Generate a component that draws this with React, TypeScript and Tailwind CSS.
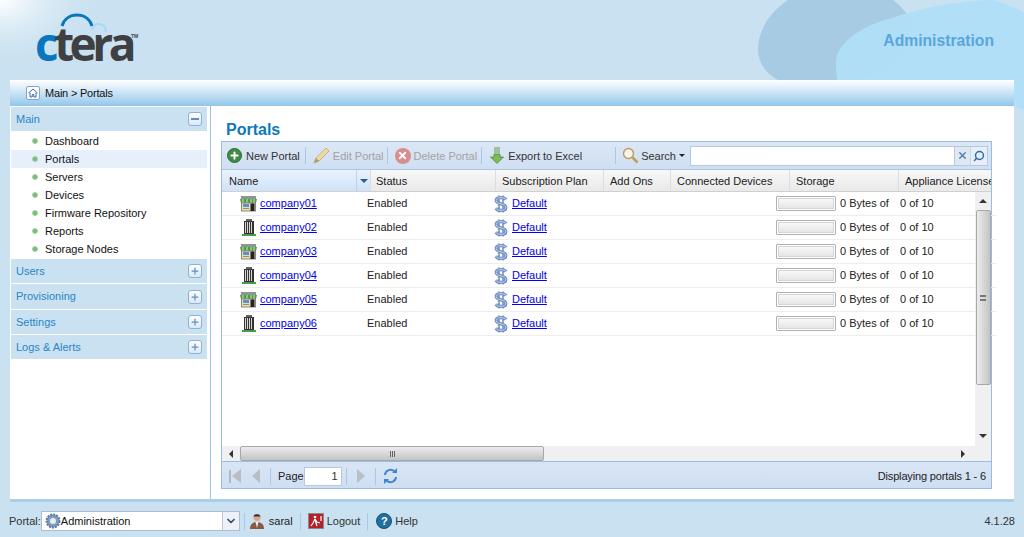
import { ChevronDown, Plus, X, Search } from "lucide-react";

const NAV = ["Dashboard", "Portals", "Servers", "Devices", "Firmware Repository", "Reports", "Storage Nodes"];

const SECTIONS = [
  { name: "Users", h: "h-[24px]" },
  { name: "Provisioning", h: "h-[25px]" },
  { name: "Settings", h: "h-[24px]" },
  { name: "Logs & Alerts", h: "h-[24px]" },
];

const COLUMNS = [
  { name: "Status", w: "w-[125px]", pl: "pl-[5px]" },
  { name: "Subscription Plan", w: "w-[108px]", pl: "pl-[6px]" },
  { name: "Add Ons", w: "w-[67px]", pl: "pl-[6px]" },
  { name: "Connected Devices", w: "w-[119px]", pl: "pl-[6px]" },
  { name: "Storage", w: "w-[109px]", pl: "pl-[6px]" },
  { name: "Appliance Licenses", w: "w-[110px]", pl: "pl-[6px]" },
];

const ROWS = ["company01", "company02", "company03", "company04", "company05", "company06"];

const Sep = ({ className = "" }: { className?: string }) => <div className={`w-px h-[17px] shrink-0 bg-[#a9c8e8] ${className}`} />;

const StoreIcon = () => (
  <svg width="17" height="17" viewBox="0 0 17 17" className="shrink-0">
    <rect x="1" y="1" width="15" height="3" fill="#8a9a8a" />
    <path d="M0 4h17l-1 4H1z" fill="#4c9a4c" />
    <path d="M3 4v4M7 4v4M11 4v4M14 4v4" stroke="#cfe8c8" strokeWidth="1" />
    <rect x="1.500" y="8" width="14" height="8" fill="#e8dcc0" stroke="#8a8a70" strokeWidth="1" />
    <rect x="3" y="9" width="6" height="3" fill="#5b8fd0" />
    <rect x="10.500" y="8.500" width="4" height="7.500" fill="#222" />
    <rect x="3" y="13" width="6" height="1" fill="#a88a50" />
  </svg>
);

const BuildingIcon = () => (
  <svg width="17" height="17" viewBox="0 0 17 17" className="shrink-0" shapeRendering="crispEdges">
    <rect x="4" y="2" width="10" height="13" fill="#333" />
    <rect x="5" y="3" width="1" height="11" fill="#d8d8d8" />
    <rect x="7" y="3" width="1" height="11" fill="#d8d8d8" />
    <rect x="9" y="3" width="1" height="11" fill="#d8d8d8" />
    <rect x="11" y="3" width="1" height="11" fill="#d8d8d8" />
    <rect x="6" y="0" width="6" height="2" fill="#666" />
    <rect x="2" y="15" width="14" height="2" fill="#4c9a4c" />
  </svg>
);

const DollarIcon = () => (
  <svg width="14" height="18" viewBox="0 0 14 18" className="shrink-0">
    <path d="M5 .5v17M9 .5v17" stroke="#5f7fb8" strokeWidth="1.400" />
    <path d="M12 4.600C10.800 3 9 2.600 7 2.600 4.200 2.600 2.200 3.600 2.200 5.600c0 4.200 9.600 2.400 9.600 6.800 0 2-2.200 3-4.800 3-2.200 0-4-.6-5.200-2.200" fill="none" stroke="#6f8fc4" strokeWidth="3.200" />
    <path d="M12 4.600C10.800 3 9 2.600 7 2.600 4.200 2.600 2.200 3.600 2.200 5.600c0 4.200 9.600 2.400 9.600 6.800 0 2-2.200 3-4.800 3-2.200 0-4-.6-5.200-2.200" fill="none" stroke="#c4d4ec" strokeWidth="1" />
  </svg>
);

const Logo = () => (
  <div className="relative w-[112px] h-[50px] ml-[35px] mt-[13px]">
    <svg width="112" height="50" viewBox="0 0 112 50" className="absolute left-0 top-0">
      <path d="M27 13C29 6 35 2 42 2c7 0 13 4 15 11" fill="none" stroke="#0a76bd" strokeWidth="3" />
      <path d="M57 17c1-4 3-6 6-6 5 0 8 3 8 8" fill="none" stroke="#a5d8f3" strokeWidth="2" />
    </svg>
    <div className="absolute left-0 top-[5px] font-['Open_Sans',sans-serif] font-bold text-[46px] leading-[50px] tracking-[-4.500px] text-[#3f4042]">
      <span className="text-[#0a76bd]">c</span>tera
    </div>
    <div className="absolute left-[96px] top-[21px] text-[5px] font-bold leading-none text-[#444]">TM</div>
  </div>
);

export default function App() {
  return (
    <div className="relative w-[1024px] h-[537px] overflow-hidden bg-[#c9e1f0] font-['Liberation_Sans',Arial,sans-serif] text-[11px] text-[#222] flex flex-col">
      {/* header art */}
      <svg width="1024" height="120" viewBox="0 0 1024 120" className="absolute left-0 top-0">
        <defs>
          <radialGradient id="corner" cx="0" cy="0" r="1">
            <stop offset="0" stopColor="#ffffff" />
            <stop offset="1" stopColor="#c9e1f0" stopOpacity="0" />
          </radialGradient>
        </defs>
        <rect width="110" height="70" fill="url(#corner)" />
        <path d="M788 0C770 12 758 30 758 50c0 14 10 26 24 32h60c30-4 68-16 70-50 1-12-8-24-19-32z" fill="#a6cbe3" />
        <path d="M836 63c0-22 30-38 52-44 30-10 72-19 105-19 12 3 24 8 31 13v97c-6-2-10-4-14-6H842c-4-12-6-28-6-41z" fill="#afdff8" fillOpacity=".93" />
      </svg>

      <div className="relative h-[80px] shrink-0">
        <Logo />
        <div className="absolute right-[30px] top-[31px] text-[15.700px] leading-[19px] font-bold text-[#5aa6dc]">Administration</div>
      </div>

      {/* main panel */}
      <div className="relative mx-[10px] h-[419px] shrink-0 bg-white flex flex-col">
        <div className="h-[26px] shrink-0 rounded-t-[3px] bg-gradient-to-b from-white to-[#92c6ea] flex items-center pl-[16px]">
          <div className="w-[14px] h-[14px] rounded-[2px] border border-[#7fa6cc] bg-white flex items-center justify-center">
            <svg width="10" height="10" viewBox="0 0 10 10">
              <path d="M.5 5 5 1l4.500 4M2 4.500V9h2.200V6.500h1.600V9H8V4.500" fill="none" stroke="#3a6ea5" strokeWidth="1" />
            </svg>
          </div>
          <span className="ml-[5px] text-[#111] tracking-[-0.2px]">Main &gt; Portals</span>
        </div>

        <div className="flex-1 flex min-h-0">
          {/* sidebar */}
          <div className="w-[201px] shrink-0 border-r border-[#9cc4e8] pl-px pr-[3px] pt-px">
            <div className="h-[24px] bg-[#c9e1f0] flex items-center justify-between pl-[5px] pr-[5px] text-[#2a86c8]">
              <span>Main</span>
              <div className="w-[14px] h-[14px] rounded-[3px] border border-[#8fb3d4] bg-gradient-to-b from-white to-[#dce8f4] flex items-center justify-center">
                <div className="w-[8px] h-[2px] bg-[#5f8fc0]" />
              </div>
            </div>
            <div className="pt-[1px] pb-[1px]">
              {NAV.map((n) => (
                <div key={n} className={`h-[18px] flex items-center pl-[21px] ${n === "Portals" ? "bg-[#e6f0fa]" : ""}`}>
                  <div className="w-[6px] h-[6px] rounded-full bg-[#79bb79] border border-[#a3d3a3]" />
                  <span className="ml-[7px] text-[#111]">{n}</span>
                </div>
              ))}
            </div>
            <div className="flex flex-col gap-px">
              {SECTIONS.map((s) => (
                <div key={s.name} className={`${s.h} bg-[#c9e1f0] flex items-center justify-between pl-[5px] pr-[5px] text-[#2a86c8]`}>
                  <span>{s.name}</span>
                  <div className="w-[14px] h-[14px] rounded-[3px] border border-[#8fb3d4] bg-gradient-to-b from-white to-[#dce8f4] flex items-center justify-center">
                    <Plus size={10} strokeWidth={3} className="text-[#5f8fc0]" />
                  </div>
                </div>
              ))}
            </div>
          </div>

          {/* content */}
          <div className="flex-1 min-w-0 pl-[10px] pr-[22px] flex flex-col">
            <h1 className="h-[35px] shrink-0 pl-[5px] pt-[14px] text-[16px] leading-[19px] font-bold text-[#0e78bd]">Portals</h1>

            <div className="w-[771px] h-[348px] border border-[#99bbe8] flex flex-col">
              {/* toolbar */}
              <div className="h-[28px] shrink-0 whitespace-nowrap bg-gradient-to-b from-[#dbe7f5] to-[#cfdff2] border-b border-[#a9c4e4] flex items-center pl-[5px]">
                <div className="w-[15px] h-[15px] shrink-0 rounded-full bg-[#3d8b45] border border-[#2c6b33] flex items-center justify-center">
                  <Plus size={11} strokeWidth={4} className="text-white" />
                </div>
                <span className="ml-[4px] mt-px text-[#333]">New Portal</span>
                <Sep className="ml-[5px]" />
                <svg width="17" height="17" viewBox="0 0 17 17" className="ml-[7px] shrink-0">
                  <path d="M1 16l2-5L13 1l3 3L6 14z" fill="#eed9a0" stroke="#c9b27c" />
                  <path d="M1 16l2-5 3 3z" fill="#a89a7c" />
                </svg>
                <span className="ml-[3px] mt-px text-[#a3a3a3]">Edit Portal</span>
                <Sep className="ml-[3px]" />
                <div className="ml-[7px] w-[16px] h-[16px] shrink-0 rounded-full bg-[#d98e8e] flex items-center justify-center">
                  <X size={11} strokeWidth={4} className="text-white" />
                </div>
                <span className="ml-[3px] mt-px text-[#a3a3a3]">Delete Portal</span>
                <Sep className="ml-[4px]" />
                <svg width="14" height="17" viewBox="0 0 14 17" className="ml-[8px] shrink-0">
                  <path d="M4 1h6M4 3h6M4 5h6" stroke="#6a9a4a" strokeWidth="1" />
                  <path d="M4 7h6v3h3.500L7 16.500.5 10H4z" fill="#7dbb55" stroke="#4f8a3a" strokeWidth=".8" />
                </svg>
                <span className="ml-[4px] mt-px text-[#333]">Export to Excel</span>
                <Sep className="ml-[33px]" />
                <svg width="17" height="17" viewBox="0 0 17 17" className="ml-[6px] shrink-0">
                  <circle cx="6.500" cy="6.500" r="5" fill="#f4f4ee" stroke="#c69a5e" strokeWidth="1.500" />
                  <path d="M10.500 10.500l5 5" stroke="#c69a5e" strokeWidth="2.500" />
                </svg>
                <span className="ml-[2px] mt-px text-[#333]">Search</span>
                <div className="ml-[3px] w-0 h-0 border-x-[3px] border-x-transparent border-t-[3px] border-t-[#222]" />
                <div className="ml-[5px] w-[298px] h-[20px] shrink-0 flex border border-[#b5c8df] bg-white">
                  <div className="flex-1" />
                  <div className="w-[16px] bg-[#dfe7f1] border-l border-[#b5c8df] flex items-center justify-center">
                    <X size={11} strokeWidth={3} className="text-[#4a7db5]" />
                  </div>
                  <div className="w-[17px] bg-[#e8eef6] border-l border-[#c8d6e6] flex items-center justify-center">
                    <Search size={12} strokeWidth={3} className="text-[#2a6db0] -scale-x-100" />
                  </div>
                </div>
              </div>

              {/* column headers */}
              <div className="h-[22px] shrink-0 flex overflow-hidden bg-gradient-to-b from-[#f8f8f8] to-[#e9e9e9] border-b border-[#d0d0d0] text-[#222]">
                <div className="w-[149px] shrink-0 flex bg-gradient-to-b from-[#eaf3fd] to-[#cfe2f8] border-r border-[#ddd]">
                  <span className="flex-1 pl-[7px] leading-[22px]">Name</span>
                  <div className="w-[14px] border-l border-[#b8d2f0] flex items-center justify-center">
                    <div className="w-0 h-0 border-x-[4px] border-x-transparent border-t-[4px] border-t-[#2d5a8e]" />
                  </div>
                </div>
                {COLUMNS.map((c) => (
                  <div key={c.name} className={`${c.w} ${c.pl} shrink-0 leading-[22px] whitespace-nowrap border-r border-[#ddd]`}>
                    {c.name}
                  </div>
                ))}
              </div>

              {/* rows and vertical scrollbar */}
              <div className="flex-1 min-h-0 flex">
                <div className="flex-1 min-w-0">
                  {ROWS.map((r, i) => (
                    <div key={r} className="h-[24px] w-[774px] border-b border-[#ededed] flex items-center">
                      <div className="w-[145px] shrink-0 pl-[18px] flex items-center">
                        {i % 2 === 0 ? <StoreIcon /> : <BuildingIcon />}
                        <a className="ml-[3px] text-[#0000ee] underline">{r}</a>
                      </div>
                      <div className="w-[127px] shrink-0 text-[#222]">Enabled</div>
                      <div className="w-[282px] shrink-0 flex items-center">
                        <DollarIcon />
                        <a className="ml-[4px] text-[#0000ee] underline">Default</a>
                      </div>
                      <div className="w-[60px] h-[15px] shrink-0 border border-[#b0b0b0] rounded-[1px] p-px">
                        <div className="h-full border border-[#d5d5d5] bg-gradient-to-b from-[#f8f8f8] to-[#e6e6e6]" />
                      </div>
                      <div className="ml-[4px] w-[60px] shrink-0 text-[#222]">0 Bytes of</div>
                      <div className="text-[#222]">0 of 10</div>
                    </div>
                  ))}
                </div>
                <div className="relative z-10 w-[16px] shrink-0 bg-[#f0f0f0] flex flex-col items-center">
                  <div className="h-[18px] shrink-0 flex items-center justify-center">
                    <div className="w-0 h-0 border-x-[4px] border-x-transparent border-b-[4px] border-b-[#333]" />
                  </div>
                  <div className="w-[15px] h-[175px] shrink-0 rounded-[2px] border border-[#a8a8a8] bg-gradient-to-r from-[#ececec] to-[#c4c4c4] flex items-center justify-center">
                    <div className="w-[6px] h-[6px] border-y-2 border-[#777]" />
                  </div>
                  <div className="flex-1" />
                  <div className="h-[20px] shrink-0 flex items-center justify-center">
                    <div className="w-0 h-0 border-x-[4px] border-x-transparent border-t-[4px] border-t-[#333]" />
                  </div>
                </div>
              </div>

              {/* horizontal scrollbar */}
              <div className="h-[15px] shrink-0 bg-[#f0f0f0] flex items-center relative z-10">
                <div className="w-[18px] shrink-0 flex justify-center">
                  <div className="w-0 h-0 border-y-[4px] border-y-transparent border-r-[4px] border-r-[#333]" />
                </div>
                <div className="w-[304px] h-[15px] shrink-0 rounded-[2px] border border-[#a8a8a8] bg-gradient-to-b from-[#ececec] to-[#c4c4c4] flex items-center justify-center gap-px">
                  <div className="w-px h-[6px] bg-[#666]" />
                  <div className="w-px h-[6px] bg-[#666]" />
                  <div className="w-px h-[6px] bg-[#666]" />
                </div>
                <div className="flex-1" />
                <div className="w-[24px] shrink-0 flex mr-[16px] justify-center">
                  <div className="w-0 h-0 border-y-[4px] border-y-transparent border-l-[4px] border-l-[#333]" />
                </div>
              </div>

              {/* pager */}
              <div className="h-[27px] shrink-0 pt-[2px] bg-gradient-to-b from-[#d8e5f5] to-[#cfdff2] border-t border-[#99bbe8] flex items-center pl-[7px] pr-[5px]">
                <div className="w-[2px] h-[13px] bg-[#b0b8c0]" />
                <div className="ml-[1px] w-0 h-0 border-y-[7px] border-y-transparent border-r-[9px] border-r-[#b8bec6]" />
                <div className="ml-[11px] w-0 h-0 border-y-[7px] border-y-transparent border-r-[8px] border-r-[#b8bec6]" />
                <Sep className="ml-[10px]" />
                <span className="ml-[7px] text-[#222]">Page</span>
                <div className="w-[38px] h-[19px] border border-[#b5c8df] bg-white text-right pr-[3px] leading-[17px] text-[#333]">1</div>
                <Sep className="ml-[4px]" />
                <div className="ml-[10px] w-0 h-0 border-y-[7px] border-y-transparent border-l-[8px] border-l-[#b8bec6]" />
                <Sep className="ml-[10px]" />
                <svg width="15" height="16" viewBox="0 0 15 16" className="ml-[7px]">
                  <path d="M2 7a5.500 5.500 0 0 1 9.500-3.500M13 9a5.500 5.500 0 0 1-9.500 3.500" fill="none" stroke="#3f86d0" strokeWidth="2" />
                  <path d="M9 5h5V0zM6 11H1v5z" fill="#3f86d0" />
                </svg>
                <span className="ml-auto text-[#222] tracking-[-0.15px]">Displaying portals 1 - 6</span>
              </div>
            </div>
          </div>
        </div>
      </div>

      {/* footer */}
      <div className="h-[3px] mx-[10px] shrink-0 bg-[#a9cfe6]" />
      <div className="flex-1 relative flex items-center pl-[9px] pr-[9px] pt-[3px] text-[#333]">
        <span>Portal:</span>
        <div className="w-[199px] h-[20px] flex border border-[#b0bcd0] bg-white">
          <svg width="16" height="16" viewBox="0 0 16 16" className="ml-[3px] mt-px shrink-0">
            <circle cx="8" cy="8" r="6.500" fill="#7f9cc0" stroke="#5c7a9e" strokeDasharray="2 1" strokeWidth="2" />
            <circle cx="8" cy="8" r="3" fill="#e8eef6" />
          </svg>
          <span className="leading-[18px] text-[#111]">Administration</span>
          <div className="ml-auto w-[17px] bg-[#eef1f5] border-l border-[#c0c8d4] flex items-center justify-center">
            <ChevronDown size={12} strokeWidth={3.5} className="text-[#2d4f80]" />
          </div>
        </div>
        <Sep className="ml-[4px]" />
        <svg width="16" height="16" viewBox="0 0 16 16" className="ml-[4px]">
          <circle cx="8" cy="4.500" r="3.500" fill="#d8a888" />
          <path d="M4.500 3.500C5 .5 11 .5 11.500 3.500z" fill="#333" />
          <path d="M1 16c0-5 3-7 7-7s7 2 7 7z" fill="#8a5a44" />
          <path d="M6.500 9h3l-1.500 6z" fill="#eee" />
        </svg>
        <span className="ml-[4px] text-[#222]">saral</span>
        <Sep className="ml-[7px]" />
        <div className="ml-[7px] w-[16px] h-[16px] bg-[#b5202a] border border-[#8a8a8a] flex items-center justify-center text-white">
          <svg width="12" height="12" viewBox="0 0 12 12">
            <circle cx="5" cy="2" r="1.300" fill="#fff" />
            <path d="M5 4 3 8l-2 3M5 4l2 3 3 1M5 4l1 4 1 3M11 1v5" fill="none" stroke="#fff" strokeWidth="1.200" />
          </svg>
        </div>
        <span className="ml-[3px]">Logout</span>
        <Sep className="ml-[7px]" />
        <div className="ml-[8px] w-[16px] h-[16px] rounded-full bg-[#1f6f9f] border border-[#145078] flex items-center justify-center text-white font-bold text-[11px] leading-none">?</div>
        <span className="ml-[3px]">Help</span>
        <span className="ml-auto text-[#333]">4.1.28</span>
      </div>
    </div>
  );
}
